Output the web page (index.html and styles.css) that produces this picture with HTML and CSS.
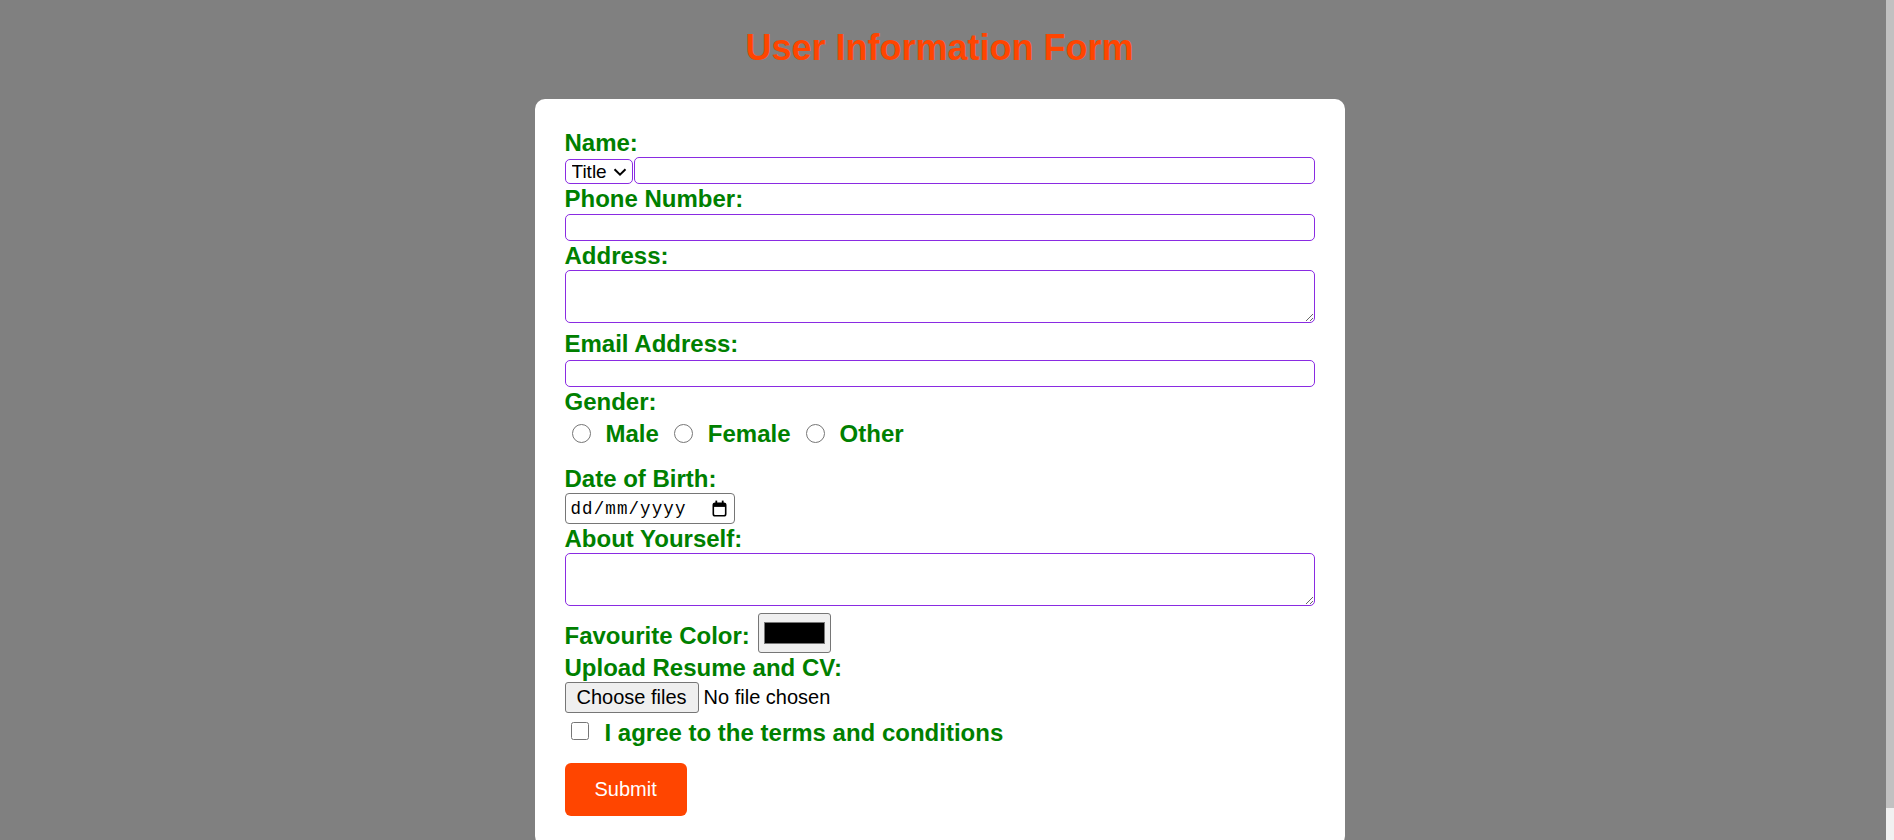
FILE: index.html
```html
<!DOCTYPE html>
<html lang="en-GB">
<head>
<meta charset="utf-8">
<title>User Information Form</title>
<link rel="stylesheet" href="styles.css">
</head>
<body>
<h1 class="page-title">User Information Form</h1>
<form class="card">
  <label class="field-label" for="fullname">Name:</label>
  <div class="name-row">
    <div class="title-wrap">
      <select class="title-select" name="title">
        <option>Title</option>
        <option>Mr.</option>
        <option>Mrs.</option>
        <option>Ms.</option>
        <option>Dr.</option>
      </select>
      <svg class="title-chevron" width="14" height="8" viewBox="0 0 14 8" aria-hidden="true">
        <path d="M1.5 1.2 L7 6.6 L12.5 1.2" fill="none" stroke="#000" stroke-width="2"/>
      </svg>
    </div>
    <input class="text-input name-input" id="fullname" type="text">
  </div>

  <label class="field-label" for="phone">Phone Number:</label>
  <input class="text-input gap-1" id="phone" type="tel">

  <label class="field-label" for="address">Address:</label>
  <textarea class="text-area" id="address"></textarea>

  <label class="field-label" for="email">Email Address:</label>
  <input class="text-input gap-2" id="email" type="email">

  <span class="field-label">Gender:</span>
  <div class="radio-row">
    <input class="radio" type="radio" name="gender" id="male">
    <label class="choice-label" for="male">Male</label>
    <input class="radio" type="radio" name="gender" id="female">
    <label class="choice-label" for="female">Female</label>
    <input class="radio" type="radio" name="gender" id="other">
    <label class="choice-label" for="other">Other</label>
  </div>

  <label class="field-label" for="dob">Date of Birth:</label>
  <div class="date-field">
    <input class="date-text" id="dob" type="text" placeholder="dd/mm/yyyy">
    <svg class="date-icon" width="15" height="17" viewBox="0 0 15 17" aria-hidden="true">
      <rect x="1.3" y="3.3" width="12.4" height="12.4" rx="1.8" fill="none" stroke="#000" stroke-width="1.6"/>
      <rect x="1.3" y="3.3" width="12.4" height="3.6" fill="#000"/>
      <rect x="3.4" y="0.6" width="1.8" height="3.6" fill="#000"/>
      <rect x="9.8" y="0.6" width="1.8" height="3.6" fill="#000"/>
    </svg>
  </div>

  <label class="field-label" for="about">About Yourself:</label>
  <textarea class="text-area" id="about"></textarea>

  <div class="color-row">
    <label class="field-label color-label" for="favcolor">Favourite Color:</label>
    <input class="color-input" id="favcolor" type="color" value="#000000">
  </div>

  <label class="field-label" for="resume">Upload Resume and CV:</label>
  <div class="file-row">
    <label class="file-btn" for="resume">Choose files</label>
    <span class="file-status">No file chosen</span>
    <input class="file-hidden" id="resume" type="file" multiple>
  </div>

  <div class="agree-row">
    <input class="checkbox" type="checkbox" id="agree">
    <label class="choice-label" for="agree">I agree to the terms and conditions</label>
  </div>

  <button class="submit-btn" type="submit">Submit</button>
</form>
<div class="scrollbar" aria-hidden="true"><div class="scrollbar-thumb"></div></div>
</body>
</html>
```

FILE: styles.css
```css
html, body {
  margin: 0;
  padding: 0;
}

body {
  background: #808080;
  font-family: "Liberation Sans", Arial, sans-serif;
  padding: 0 15px 8px 0;
}

.page-title {
  margin: 28px 0 31px;
  text-align: center;
  color: #ff4500;
  font-size: 36px;
  line-height: 40px;
  font-weight: bold;
}

.card {
  width: 750px;
  margin: 0 auto;
  padding: 29px 30px 30px;
  background: #ffffff;
  border-radius: 10px;
  display: flex;
  flex-direction: column;
  align-items: flex-start;
}

.field-label {
  display: block;
  color: #008000;
  font-weight: bold;
  font-size: 24px;
  line-height: 29px;
}

.name-row {
  align-self: stretch;
  display: flex;
  align-items: flex-end;
  gap: 1px;
}

.title-wrap {
  position: relative;
  display: flex;
}

.title-select {
  -webkit-appearance: none;
  appearance: none;
  box-sizing: border-box;
  width: 68px;
  height: 25px;
  margin: 0;
  padding: 0 22px 0 6px;
  font-family: "Liberation Sans", Arial, sans-serif;
  font-size: 19px;
  line-height: 23px;
  color: #000;
  background: #fff;
  border: 1px solid #8a2be2;
  border-radius: 5px;
}

.title-chevron {
  position: absolute;
  left: 48px;
  top: 9px;
  pointer-events: none;
}

.text-input {
  align-self: stretch;
  box-sizing: border-box;
  height: 27px;
  margin: 0;
  padding: 0 4px;
  font-family: "Liberation Sans", Arial, sans-serif;
  font-size: 16px;
  border: 1px solid #8a2be2;
  border-radius: 5px;
  background: #fff;
}

.name-input {
  flex: 1;
  min-width: 0;
}

.gap-1 { margin-top: 1px; }
.gap-2 { margin-top: 2px; }

.text-area {
  align-self: stretch;
  box-sizing: border-box;
  height: 53px;
  margin: 0 0 6px;
  padding: 2px 4px;
  font-family: "Liberation Sans", Arial, sans-serif;
  font-size: 16px;
  border: 1px solid #8a2be2;
  border-radius: 5px;
  background: #fff;
}

.radio-row {
  display: flex;
  align-items: center;
  padding: 3px 0 16px;
}

.radio {
  width: 19px;
  height: 19px;
  margin: 0 15px 0 7px;
}

.choice-label {
  color: #008000;
  font-weight: bold;
  font-size: 24px;
  line-height: 29px;
  margin-right: 8px;
}

.date-field {
  box-sizing: border-box;
  width: 170px;
  height: 31px;
  display: flex;
  align-items: center;
  padding: 0 7px 0 5px;
  background: #fff;
  border: 1px solid #767676;
  border-radius: 4px;
}

.date-text {
  flex: 1;
  min-width: 0;
  margin: 0;
  padding: 0;
  border: none;
  outline: none;
  background: transparent;
  font-family: "Liberation Mono", "DejaVu Sans Mono", monospace;
  font-size: 17.5px;
  letter-spacing: 1.1px;
  color: #000;
}

.date-text::placeholder {
  color: #000;
  opacity: 1;
}

.date-icon {
  flex: none;
}

.color-row {
  display: flex;
  align-items: flex-end;
  gap: 8px;
}

.color-label {
  margin-bottom: 3px;
}

.color-input {
  box-sizing: border-box;
  width: 73px;
  height: 40px;
  margin: 1px 0 0;
  padding: 4px 3px;
  background: #efefef;
  border: 1px solid #767676;
  border-radius: 3px;
}

.file-row {
  display: flex;
  align-items: center;
  gap: 5px;
  font-size: 20px;
  color: #000;
}

.file-btn {
  box-sizing: border-box;
  height: 31px;
  display: flex;
  align-items: center;
  padding: 0 11px;
  background: #efefef;
  border: 1px solid #767676;
  border-radius: 3px;
}

.file-hidden {
  display: none;
}

.agree-row {
  display: flex;
  align-items: center;
  margin-top: 5px;
}

.checkbox {
  width: 18px;
  height: 18px;
  margin: 0 16px 3px 6px;
}

.submit-btn {
  margin-top: 16px;
  padding: 15px 30px;
  font-family: "Liberation Sans", Arial, sans-serif;
  font-size: 20px;
  line-height: 23px;
  color: #ffffff;
  background: #ff4500;
  border: none;
  border-radius: 6px;
}

.scrollbar {
  position: fixed;
  top: 0;
  right: 0;
  width: 8px;
  height: 100%;
  background: #f1f1f1;
}

.scrollbar-thumb {
  height: 808px;
  background: #c1c1c1;
}
```
